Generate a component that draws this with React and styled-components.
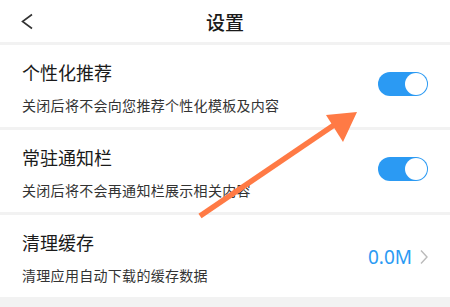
import React from "react";
import styled, { createGlobalStyle } from "styled-components";

const GlobalStyle = createGlobalStyle`
  html, body {
    margin: 0;
    padding: 0;
    background: #f2f2f2;
    font-family: "Noto Sans CJK SC", "Noto Sans", sans-serif;
  }
`;

const Page = styled.div`
  position: relative;
  width: 450px;
  height: 307px;
  overflow: hidden;
  background: #f2f2f2;
  display: flex;
  flex-direction: column;
  gap: 3px;
`;

const Header = styled.div`
  height: 42px;
  background: #fff;
  display: flex;
  align-items: center;
  justify-content: center;
  position: relative;
`;

const Back = styled.svg`
  position: absolute;
  left: 20px;
  top: 13px;
`;

const Title = styled.div`
  font-size: 19px;
  color: #1a1a1a;
  font-weight: 500;
`;

const Row = styled.div`
  height: 82px;
  box-sizing: border-box;
  background: #fff;
  display: flex;
  align-items: center;
  justify-content: space-between;
  padding: 0 22px 0 22px;
`;

const TextBlock = styled.div`
  display: flex;
  flex-direction: column;
  gap: 12px;
  margin-top: 3px;
`;

const RowTitle = styled.div`
  font-size: 18px;
  line-height: 22px;
  color: #1a1a1a;
`;

const RowSub = styled.div`
  font-size: 14px;
  line-height: 20px;
  letter-spacing: 0.3px;
  color: #333;
`;

const Switch = styled.div`
  width: 50px;
  height: 24px;
  border-radius: 12px;
  background: ${(p) => (p.on ? "#2b9af3" : "#ddd")};
  position: relative;
  margin-top: -4px;
  &::after {
    content: "";
    position: absolute;
    top: 1px;
    ${(p) => (p.on ? "right: 1px;" : "left: 1px;")}
    width: 22px;
    height: 22px;
    border-radius: 50%;
    background: #fff;
  }
`;

const Value = styled.div`
  display: flex;
  align-items: center;
  gap: 8px;
  color: #2b9af3;
  font-family: "Noto Sans", sans-serif;
  font-size: 19px;
  margin-top: 2px;
`;

const Arrow = styled.svg`
  position: absolute;
  left: 0;
  top: 0;
  pointer-events: none;
`;

const items = [
  { title: "个性化推荐", sub: "关闭后将不会向您推荐个性化模板及内容", toggle: true },
  { title: "常驻通知栏", sub: "关闭后将不会再通知栏展示相关内容", toggle: true },
  { title: "清理缓存", sub: "清理应用自动下载的缓存数据", value: "0.0M" },
];

export default function App() {
  return (
    <>
      <GlobalStyle />
      <Page>
        <Header>
          <Back width="14" height="18" viewBox="0 0 14 18">
            <path d="M12 1.5 L2.5 8.5 L12 15.5" fill="none" stroke="#333" strokeWidth="1.6" />
          </Back>
          <Title>设置</Title>
        </Header>
        {items.map((it) => (
          <Row key={it.title}>
            <TextBlock>
              <RowTitle>{it.title}</RowTitle>
              <RowSub>{it.sub}</RowSub>
            </TextBlock>
            {it.toggle ? (
              <Switch on={1} />
            ) : (
              <Value>
                {it.value}
                <svg width="8" height="16" viewBox="0 0 8 16">
                  <path d="M1 1.5 L7 8 L1 14.5" fill="none" stroke="#bbb" strokeWidth="1.4" />
                </svg>
              </Value>
            )}
          </Row>
        ))}
        <Arrow width="450" height="307" viewBox="0 0 450 307">
          <line x1="200" y1="216" x2="337" y2="123" stroke="#ff7a45" strokeWidth="5.5" strokeLinecap="butt" />
          <polygon points="357,112 326,115 343,142" fill="#ff7a45" />
        </Arrow>
      </Page>
    </>
  );
}
